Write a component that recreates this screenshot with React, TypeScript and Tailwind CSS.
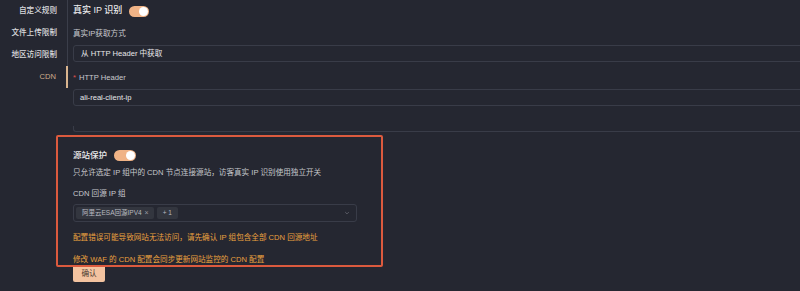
import React from "react";

const navItems = ["自定义规则", "文件上传限制", "地区访问限制", "CDN"];

const Toggle = ({ className }: { className: string }) => (
	<span className={`relative inline-flex items-center rounded-full bg-[#f0b386] ${className}`}>
		<span className="absolute right-[1px] h-[9px] w-[9px] rounded-full bg-white" />
	</span>
);

const App = () => {
	return (
		<div className="relative flex h-[291px] w-[800px] overflow-hidden bg-[#252731] font-['Liberation_Sans','Noto_Sans_CJK_SC',sans-serif] text-[#e4e4e6]">
			{/* side tabs */}
			<nav className="flex w-[68px] shrink-0 flex-col self-start">
				{navItems.map((item) => {
					const active = item === "CDN";
					return (
						<div
							key={item}
							className={`flex h-[22px] items-center justify-end pr-[10px] text-[7.6px] font-medium ${
								active
									? "border-r-[2px] border-[#d9b48e] text-[#cfae8c]"
									: "border-r border-[#3b3e4a] text-[#dadadd]"
							}`}
						>
							{item}
						</div>
					);
				})}
			</nav>

			<div className="flex w-[760px] shrink-0 flex-col pl-[5px]">
				<div className="flex h-[22px] items-center gap-[7px]">
					<span className="text-[9px] font-medium text-[#ececee]">真实 IP 识别</span>
					<Toggle className="h-[11px] w-[20px]" />
				</div>

				<div className="mt-[6px] flex h-[12px] items-center text-[7.6px] text-[#c9cacf]">真实IP获取方式</div>
				<div className="mt-[5px] flex h-[17px] items-center rounded-[3px] border border-[#393c48] pl-[7px] text-[7.6px] text-[#e8e8ea]">
					从 HTTP Header 中获取
				</div>

				<div className="mt-[10px] flex h-[12px] items-center text-[7.6px] text-[#c9cacf]">
					<span className="mr-[3px] text-[#e0504f]">*</span>HTTP Header
				</div>
				<div className="mt-[5px] flex h-[17px] items-center rounded-[3px] border border-[#393c48] pl-[6px] text-[7.6px] text-[#e8e8ea]">
					ali-real-client-ip
				</div>

				<div className="mt-[20px] h-[6px] rounded-bl-[3px] border-b border-l border-[#393c48]" />

				{/* origin protection */}
				<div className="mt-[15px] flex h-[16px] items-center gap-[7px]">
					<span className="text-[8.5px] font-medium text-[#ececee]">源站保护</span>
					<Toggle className="h-[11px] w-[22px]" />
				</div>
				<div className="mt-[3px] flex h-[13px] items-center text-[7.6px] text-[#c6c7cc]">
					只允许选定 IP 组中的 CDN 节点连接源站，访客真实 IP 识别使用独立开关
				</div>

				<div className="mt-[9px] flex h-[12px] items-center text-[7.6px] text-[#c9cacf]">CDN 回源 IP 组</div>
				<div className="mt-[4px] flex h-[18px] w-[284px] items-center gap-[3px] rounded-[3px] border border-[#393c48] pl-[2px] pr-[6px]">
					<span className="flex h-[12px] items-center gap-[3px] rounded-[2px] bg-[#33363f] pl-[6px] pr-[5px] text-[6.5px] text-[#b9bac0]">
						阿里云ESA回源IPV4
						<span className="text-[7px] text-[#9a9ba3]">×</span>
					</span>
					<span className="flex h-[12px] items-center rounded-[2px] bg-[#33363f] px-[6px] text-[6.5px] text-[#b9bac0]">+ 1</span>
					<svg className="ml-auto h-[6px] w-[6px]" viewBox="0 0 10 10" fill="none">
						<path d="M2 3.5 5 6.5 8 3.5" stroke="#6c6e78" strokeWidth="1.2" />
					</svg>
				</div>

				<div className="mt-[10px] flex h-[12px] items-center text-[7.6px] text-[#eba13f]">
					配置错误可能导致网站无法访问，请先确认 IP 组包含全部 CDN 回源地址
				</div>
				<div className="mt-[10px] flex h-[11px] items-center text-[7.6px] text-[#eba13f]">
					修改 WAF 的 CDN 配置会同步更新网站监控的 CDN 配置
				</div>

				<button className="mt-0 flex h-[17px] w-[32px] items-center justify-center rounded-[2px] bg-[#f3c3a0] text-[7.6px] text-[#4b3a30]">
					确认
				</button>
			</div>

			{/* annotation frame */}
			<div className="pointer-events-none absolute left-[56px] top-[135px] h-[132px] w-[327px] rounded-[2px] border-2 border-[#dc5a3e]" />
		</div>
	);
};

export default App;
